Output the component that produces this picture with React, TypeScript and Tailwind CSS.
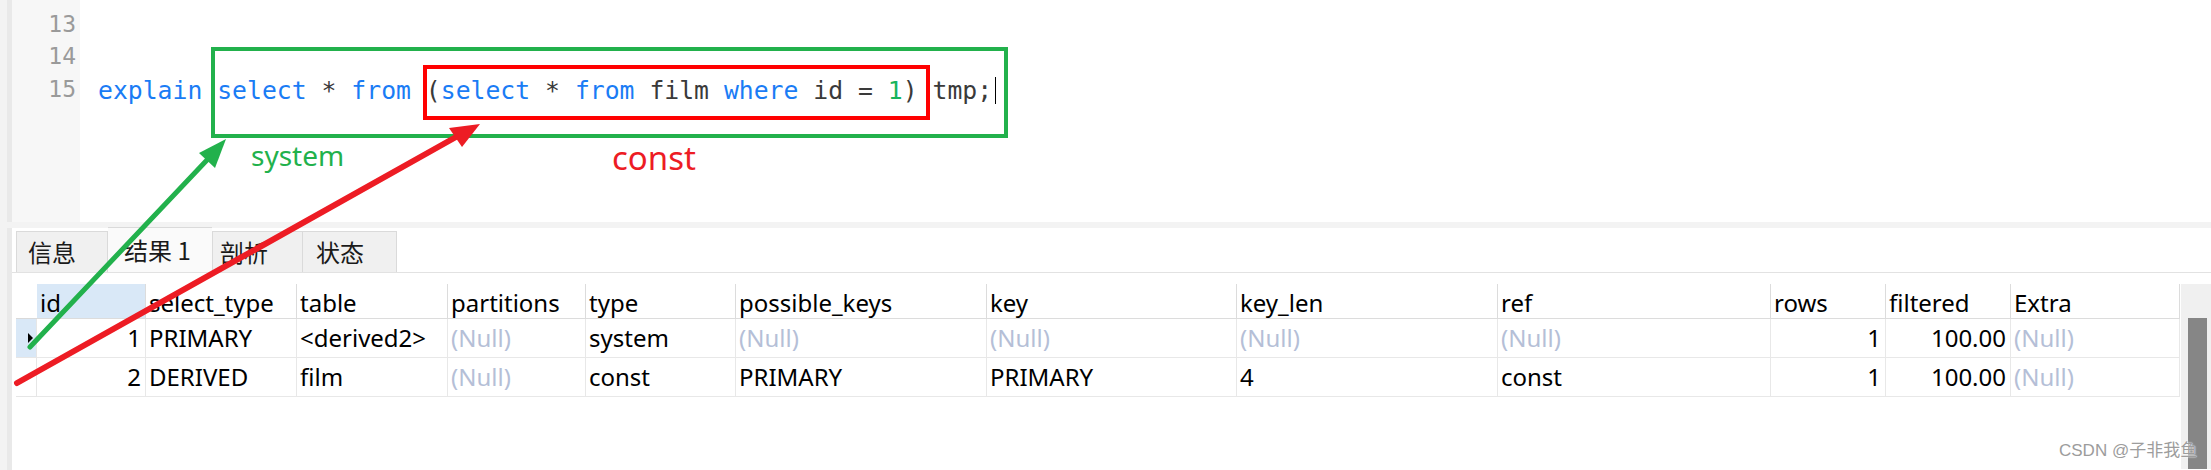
const KW = 'text-[#1a7cf5]';

const headers = [
  'id',
  'select_type',
  'table',
  'partitions',
  'type',
  'possible_keys',
  'key',
  'key_len',
  'ref',
  'rows',
  'filtered',
  'Extra',
];

const rows = [
  ['1', 'PRIMARY', '<derived2>', null, 'system', null, null, null, null, '1', '100.00', null],
  ['2', 'DERIVED', 'film', null, 'const', 'PRIMARY', 'PRIMARY', '4', 'const', '1', '100.00', null],
];

// columns that are right aligned (id, rows, filtered)
const rightCols = [0, 9, 10];

function CodeLine() {
  return (
    <span className="text-[#3a3a3a]">
      <span className={KW}>explain</span> <span className={KW}>select</span> *{' '}
      <span className={KW}>from</span> (<span className={KW}>select</span> *{' '}
      <span className={KW}>from</span> film <span className={KW}>where</span> id ={' '}
      <span className="text-[#17b45c]">1</span>) tmp;
      <span className="ml-[3px] inline-block h-[27px] w-px translate-y-[5px] bg-black" />
    </span>
  );
}

function Editor() {
  const nums = [12, 13, 14, 15];
  return (
    <div className="ml-[7px] flex h-[222px] overflow-hidden border-l-[5px] border-[#e9e9e9]">
      <div className="w-[68px] bg-[#f7f7f7] pr-[4px] text-right font-['DejaVu_Sans_Mono',monospace] text-[23px] text-[#9a9a9a]">
        <div className="mt-[-25px]">
          {nums.map((n) => (
            <div key={n} className="h-[32.5px] leading-[32.5px]">
              {n}
            </div>
          ))}
        </div>
      </div>
      <div className="flex-1 bg-white pl-[18px] font-['DejaVu_Sans_Mono',monospace] text-[24.75px] whitespace-pre">
        <div className="mt-[-26px]">
          <div className="h-[32.5px] leading-[32.5px]"> </div>
          <div className="h-[32.5px] leading-[32.5px]"> </div>
          <div className="h-[32.5px] leading-[32.5px]"> </div>
          <div className="h-[32.5px] leading-[32.5px]">
            <CodeLine />
          </div>
        </div>
      </div>
    </div>
  );
}

function Tabs() {
  return (
    <div className="flex h-[45px] items-end border-b border-[#e2e2e2] pl-[4px] font-['Noto_Sans_CJK_SC',sans-serif] text-[24px] text-[#1a1a1a]">
      <div className="flex h-[41px] w-[92px] items-center border border-b-0 border-[#dadada] bg-[#f0f0f0] pl-[11px]">
        信息
      </div>
      <div className="flex h-[45px] w-[104px] items-center border-t border-[#dadada] bg-[#fafafa] pl-[16px]">
        结果 1
      </div>
      <div className="flex h-[41px] w-[91px] items-center border border-b-0 border-[#dadada] bg-[#f0f0f0] pl-[7px]">
        剖析
      </div>
      <div className="flex h-[41px] w-[94px] items-center border border-b-0 border-l-0 border-[#dadada] bg-[#f0f0f0] pl-[13px]">
        状态
      </div>
    </div>
  );
}

function ResultTable() {
  return (
    <div className="flex items-start pt-[11px]">
      <div className="ml-[4px] grid grid-cols-[21px_109px_151px_151px_138px_150px_251px_250px_261px_273px_115px_125px_169px] content-start font-['Noto_Sans',sans-serif] text-[24px] text-black">
        <div className="h-[35px] border-b border-[#d9d9d9]" />
        {headers.map((h, i) => (
          <div
            key={h}
            className={`h-[35px] overflow-hidden border-b border-r border-[#dcdcdc] pl-[3px] leading-[37px] ${
              i === 0 ? 'bg-[#d9e8f7]' : 'bg-white'
            }`}
          >
            {h}
          </div>
        ))}
        {rows.map((r, ri) => (
          <div key={ri} className="contents">
            <div
              className={`flex h-[39px] items-center border-b border-r border-[#e6e6e6] pl-[12px] ${
                ri === 0 ? 'bg-[#d9e8f7]' : 'bg-white'
              }`}
            >
              {ri === 0 && (
                <span className="h-0 w-0 border-y-[5px] border-l-[5px] border-y-transparent border-l-black" />
              )}
            </div>
            {r.map((v, ci) => (
              <div
                key={ci}
                className={`h-[39px] overflow-hidden whitespace-nowrap border-b border-r border-[#e8e8e8] leading-[38px] ${
                  rightCols.includes(ci) ? 'pr-[4px] text-right' : 'pl-[3px]'
                } ${v === null ? 'text-[#b5bfd7]' : ''}`}
              >
                {v === null ? '(Null)' : v}
              </div>
            ))}
          </div>
        ))}
      </div>
      <div className="ml-auto flex h-[185px] w-[30px] bg-[#f0f0f0] pl-[7px] pr-[4px] pt-[34px]">
        <div className="flex-1 bg-[#868686]" />
      </div>
    </div>
  );
}

function Annotations() {
  return (
    <svg
      className="pointer-events-none absolute left-0 top-0"
      width={2211}
      height={470}
      viewBox="0 0 2211 470"
    >
      {/* boxes */}
      <rect x={213} y={49} width={793} height={87} fill="none" stroke="#22b14c" strokeWidth={4} />
      <rect x={425} y={67} width={503} height={51} fill="none" stroke="#ff0000" strokeWidth={4} />

      {/* green arrow */}
      <line x1={30} y1={347} x2={207} y2={160} stroke="#22b14c" strokeWidth={5} strokeLinecap="round" />
      <polygon points="226,139 199,153 215,168" fill="#22b14c" />

      {/* red arrow */}
      <line x1={17} y1={383} x2={456} y2={137} stroke="#ed1c24" strokeWidth={6} strokeLinecap="round" />
      <polygon points="480,124 449,128 462,147" fill="#ed1c24" />

      <text x={251} y={166} fontFamily="Noto Sans, sans-serif" fontSize={28} fill="#22b14c">
        system
      </text>
      <text x={612} y={170} fontFamily="Noto Sans, sans-serif" fontSize={33} fill="#ed1c24">
        const
      </text>
    </svg>
  );
}

export default function App() {
  return (
    <div className="relative h-[470px] w-[2211px] overflow-hidden bg-[#f3f3f3]">
      <Editor />
      <div className="h-[6px]" />
      <div className="ml-[7px] h-[242px] border-l-[5px] border-[#e9e9e9] bg-white">
        <Tabs />
        <ResultTable />
      </div>
      <Annotations />
      <span className="absolute left-[2059px] top-[442px] whitespace-nowrap font-['Liberation_Sans','Noto_Sans_CJK_SC',sans-serif] text-[17px] leading-none text-[#9c9c9c] [text-shadow:0_0_2px_#fff,0_0_1px_#fff]">
        CSDN @子非我鱼
      </span>
    </div>
  );
}
